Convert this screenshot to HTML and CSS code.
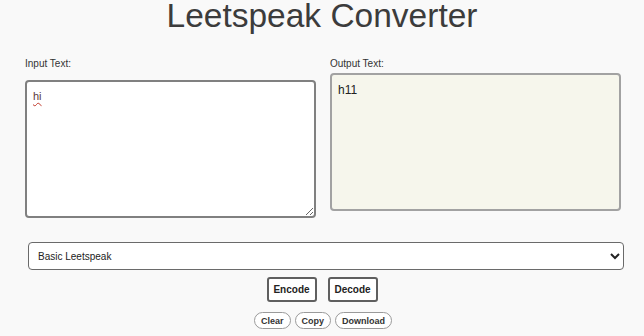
FILE: index.html
```html
<!DOCTYPE html>
<html lang="en">
<head>
<meta charset="utf-8">
<title>Leetspeak Converter</title>
<link rel="stylesheet" href="styles.css">
</head>
<body>
<h1 class="title">Leetspeak Converter</h1>
<div class="columns">
  <div class="col col-input">
    <label class="label" for="input">Input Text:</label>
    <textarea id="input" class="box box-input" spellcheck="true">hi</textarea>
  </div>
  <div class="col col-output">
    <label class="label" for="output">Output Text:</label>
    <textarea id="output" class="box box-output" readonly>h11</textarea>
  </div>
</div>
<div class="mode-row">
  <select class="mode">
    <option>Basic Leetspeak</option>
    <option>Advanced Leetspeak</option>
  </select>
</div>
<div class="actions">
  <button class="btn">Encode</button>
  <button class="btn">Decode</button>
</div>
<div class="tools">
  <button class="pill">Clear</button>
  <button class="pill">Copy</button>
  <button class="pill">Download</button>
</div>
</body>
</html>
```
FILE: styles.css
```css
html, body {
  margin: 0;
  padding: 0;
  background: #f9f9f9;
  font-family: "Liberation Sans", Arial, sans-serif;
  color: #333;
}
.title {
  margin: 0;
  font-size: 33.5px;
  line-height: 32px;
  font-weight: normal;
  text-align: center;
  color: #3c3c3c;
}
.columns {
  display: grid;
  grid-template-columns: 291px 291px;
  column-gap: 14px;
  padding: 26px 0 0 25px;
}
.col {
  display: flex;
  flex-direction: column;
}
.label {
  font-size: 10px;
  line-height: 12px;
  color: #333;
}
.box {
  box-sizing: border-box;
  width: 291px;
  height: 138px;
  border: 2px solid #808080;
  border-radius: 4px;
  padding: 8px 6px;
  font-family: "Liberation Sans", Arial, sans-serif;
  margin: 0;
}
.box-input {
  margin-top: 10px;
  background: #fff;
  font-size: 11px;
  color: #5a3a3a;
  resize: vertical;
  text-decoration: underline wavy #c0392b;
  text-decoration-thickness: 1px;
  text-underline-offset: 2px;
}
.box-output {
  margin-top: 3px;
  background: #f6f6ec;
  border-color: #a2a2a2;
  font-size: 12px;
  color: #222;
  resize: none;
}
.mode-row {
  padding: 24px 20px 0 28px;
}
.mode {
  width: 100%;
  box-sizing: border-box;
  height: 28px;
  border: 1.5px solid #6a6a6a;
  border-radius: 4px;
  background: #fff;
  padding: 0 5px;
  font-family: "Liberation Sans", Arial, sans-serif;
  font-size: 10px;
  color: #222;
}
.actions {
  display: flex;
  justify-content: center;
  gap: 11px;
  margin-top: 7px;
}
.btn {
  width: 50px;
  height: 25px;
  border: 2px solid #5f5f5f;
  border-radius: 3px;
  background: #fff;
  font-family: "Liberation Sans", Arial, sans-serif;
  font-size: 10px;
  font-weight: bold;
  color: #222;
  padding: 0;
}
.tools {
  display: flex;
  justify-content: center;
  gap: 4px;
  margin-top: 10px;
  padding-left: 2px;
}
.pill {
  height: 17px;
  border: 1px solid #9a9a9a;
  border-radius: 9px;
  background: #fff;
  font-family: "Liberation Sans", Arial, sans-serif;
  font-size: 9px;
  font-weight: bold;
  color: #333;
  padding: 0 6px;
}
```
